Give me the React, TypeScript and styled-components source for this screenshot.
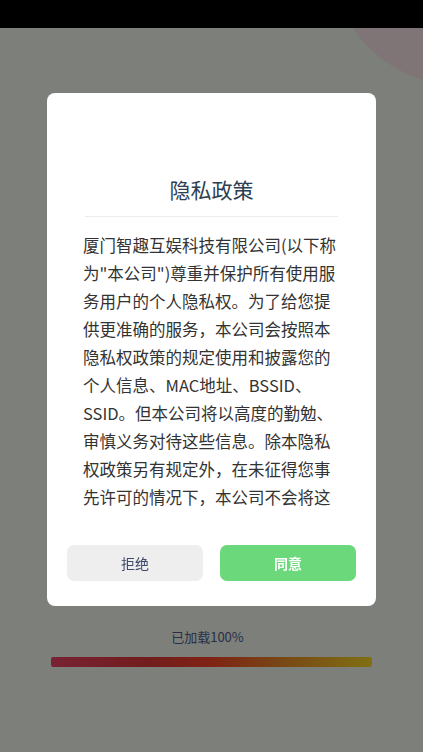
import styled, { createGlobalStyle } from "styled-components";

const GlobalStyle = createGlobalStyle`
  html, body {
    margin: 0;
    padding: 0;
    width: 100%;
    height: 100%;
    overflow: hidden;
  }
  body {
    font-family: "Noto Sans CJK SC", "Noto Sans", sans-serif;
    background: #fbfff7;
  }
  #root {
    height: 100%;
  }
`;

// 弹窗里可见的条款内容
const policyText =
  '厦门智趣互娱科技有限公司(以下称为"本公司")尊重并保护所有使用服务用户的个人隐私权。为了给您提供更准确的服务，本公司会按照本隐私权政策的规定使用和披露您的个人信息、MAC地址、BSSID、SSID。但本公司将以高度的勤勉、审慎义务对待这些信息。除本隐私权政策另有规定外，在未征得您事先许可的情况下，本公司不会将这';

export default function App() {
  const loaded = 100;

  return (
    <Page>
      <GlobalStyle />
      <StatusBar />
      <Splash>
        <Bubble />
        <LoadingArea>
          <LoadingText>已加载{loaded}%</LoadingText>
          <ProgressTrack>
            <ProgressFill style={{ width: `${loaded}%` }} />
          </ProgressTrack>
        </LoadingArea>
      </Splash>

      {/* 隐私政策弹窗 */}
      <Overlay>
        <Dialog>
          <DialogTitle>隐私政策</DialogTitle>
          <Divider />
          <PolicyBody>{policyText}</PolicyBody>
          <ButtonRow>
            <RejectButton>拒绝</RejectButton>
            <AgreeButton>同意</AgreeButton>
          </ButtonRow>
        </Dialog>
      </Overlay>
    </Page>
  );
}

const Page = styled.div`
  position: relative;
  width: 100%;
  height: 100%;
  display: flex;
  flex-direction: column;
  overflow: hidden;
`;

const StatusBar = styled.div`
  height: 28px;
  flex-shrink: 0;
  background: #000;
`;

const Splash = styled.div`
  position: relative;
  flex: 1;
  display: flex;
  flex-direction: column;
  justify-content: flex-end;
  overflow: hidden;
`;

const Bubble = styled.div`
  position: absolute;
  top: -206px;
  right: -171px;
  width: 264px;
  height: 264px;
  border-radius: 50%;
  background: radial-gradient(circle at 75% 75%, #ffe6ec 0%, #ffeaee 70%, #fbf0f0 100%);
`;

const LoadingArea = styled.div`
  display: flex;
  flex-direction: column;
  align-items: center;
  gap: 10px;
  padding: 0 51px 85px;
`;

const LoadingText = styled.div`
  font-size: 13px;
  line-height: 20px;
  color: #545e8a;
  margin-right: 8px;
`;

const ProgressTrack = styled.div`
  width: 100%;
  height: 10px;
  border-radius: 2px;
  overflow: hidden;
`;

const ProgressFill = styled.div`
  height: 100%;
  background: linear-gradient(90deg, #f04468 0%, #e43a3a 30%, #ff4628 50%, #f08a2a 70%, #ffe028 100%);
`;

const Overlay = styled.div`
  position: fixed;
  inset: 0;
  background: rgba(0, 0, 0, 0.5);
  display: flex;
  justify-content: center;
  align-items: flex-start;
  padding-top: 93px;
`;

const Dialog = styled.div`
  width: 329px;
  box-sizing: border-box;
  background: #fff;
  border-radius: 8px;
  padding: 82px 0 25px;
  display: flex;
  flex-direction: column;
  align-items: center;
`;

const DialogTitle = styled.h2`
  margin: 0;
  font-size: 21px;
  font-weight: 400;
  line-height: 28px;
  color: #2c3e50;
`;

const Divider = styled.div`
  width: 253px;
  height: 1px;
  background: #ececec;
  margin: 13px 0 14px;
`;

const PolicyBody = styled.div`
  width: 257px;
  height: 280px;
  overflow: hidden;
  font-size: 16.5px;
  line-height: 28px;
  color: #333;
  text-align: left;
`;

const ButtonRow = styled.div`
  width: 100%;
  box-sizing: border-box;
  padding: 0 20px;
  margin-top: 34px;
  display: grid;
  grid-template-columns: 1fr 1fr;
  gap: 17px;
`;

const BaseButton = styled.button`
  height: 36px;
  border: none;
  border-radius: 7px;
  font-family: inherit;
  font-size: 14px;
  cursor: pointer;
`;

const RejectButton = styled(BaseButton)`
  background: #eeeeef;
  color: #3c4a6a;
`;

const AgreeButton = styled(BaseButton)`
  background: #6cd87c;
  color: #fff;
  font-weight: 700;
`;
